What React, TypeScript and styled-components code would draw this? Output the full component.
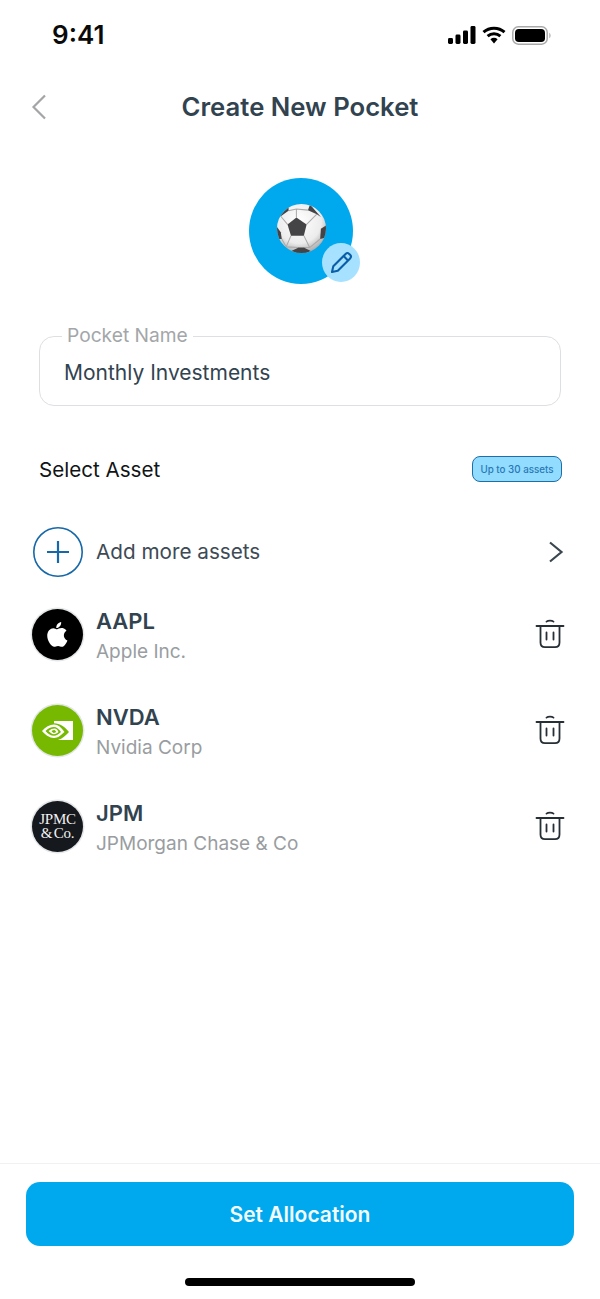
import React from "react";
import styled, { createGlobalStyle } from "styled-components";

const GlobalStyle = createGlobalStyle`
  html, body {
    margin: 0;
    padding: 0;
    background: #fff;
  }
  body {
    font-family: Inter, "Liberation Sans", sans-serif;
  }
`;

const assets = [
  { ticker: "AAPL", name: "Apple Inc.", logo: "apple" },
  { ticker: "NVDA", name: "Nvidia Corp", logo: "nvidia" },
  { ticker: "JPM", name: "JPMorgan Chase & Co", logo: "jpm" },
];

const SignalIcon = () => (
  <svg width="28" height="18" viewBox="0 0 28 18">
    <rect x="0" y="12" width="5" height="6" rx="1.400" fill="#000" />
    <rect x="7.500" y="8.500" width="5" height="9.500" rx="1.400" fill="#000" />
    <rect x="15" y="4.500" width="5" height="13.500" rx="1.400" fill="#000" />
    <rect x="22.500" y="0" width="5" height="18" rx="1.400" fill="#000" />
  </svg>
);

const WifiIcon = () => (
  <svg width="24" height="18" viewBox="0 0 24 18" fill="none">
    <path d="M1.500 6.200C7.400 .9 16.600 .9 22.500 6.200" stroke="#000" strokeWidth="3" />
    <path d="M5.600 10.200C9.300 7 14.700 7 18.400 10.200" stroke="#000" strokeWidth="3" />
    <path d="M8.400 13.200C10.500 11.400 13.500 11.400 15.600 13.200L12 17.400Z" fill="#000" />
  </svg>
);

const BatteryIcon = () => (
  <svg width="39" height="19" viewBox="0 0 39 19">
    <rect x=".8" y=".8" width="34.400" height="17.400" rx="5.500" fill="none" stroke="#a9a9a9" strokeWidth="1.500" />
    <rect x="3" y="3" width="30" height="13" rx="3.800" fill="#000" />
    <path d="M37 6.700C38.300 7.200 38.800 8.300 38.800 9.500C38.800 10.700 38.300 11.800 37 12.300Z" fill="#c4c4c4" />
  </svg>
);

const BackIcon = () => (
  <svg width="16" height="26" viewBox="0 0 16 26" fill="none">
    <path d="M14 1.500L2.500 13L14 24.500" stroke="#a3a5a7" strokeWidth="2.200" />
  </svg>
);

const SoccerBall = () => (
  <svg width="49" height="49" viewBox="0 0 48 48">
    <defs>
      <radialGradient id="ball" cx="45%" cy="35%" r="70%">
        <stop offset="0%" stopColor="#ffffff" />
        <stop offset="65%" stopColor="#ececec" />
        <stop offset="100%" stopColor="#9d9d9d" />
      </radialGradient>
      <clipPath id="ballClip">
        <circle cx="24" cy="24" r="24" />
      </clipPath>
    </defs>
    <circle cx="24" cy="24" r="24" fill="url(#ball)" />
    <g clipPath="url(#ballClip)">
      <path
        d="M19 13.300V5M19 5L11.300 6.700M19 5L30.300 6M29 20L39 10M10.300 20L3.700 12M26.300 31L32 42.700M13.700 31L9 42M42.300 34.300L32 42.700M4.700 34.300L9 42M9 42L21.300 42.700M32 42.700L26.300 42.700"
        fill="none"
        stroke="#a9a9a9"
        strokeWidth="1"
      />
      <path d="M19 13.300L29 20L26.300 31H13.700L10.300 20Z" fill="#444446" />
      <path d="M32.300 .5L43 12.700L39 10L30.300 6Z" fill="#444446" />
      <path d="M11.300 2.700L.3 12.700L3.700 12L11.300 6.700Z" fill="#444446" />
      <path d="M48 21L43 24.300L42.300 34.300L48 32.700Z" fill="#444446" />
      <path d="M-1 21L3.700 27.700L4.700 34.300L0 34.300Z" fill="#444446" />
      <path d="M14 46L21.300 42.700H26.300L33 46L24 50Z" fill="#444446" />
    </g>
  </svg>
);

const PencilIcon = () => (
  <svg width="24" height="24" viewBox="0 0 24 24" fill="none">
    <path
      d="M3 21L4.300 15.200L16.600 2.900C17.600 1.900 19.200 1.900 20.200 2.900L21.100 3.800C22.100 4.800 22.100 6.400 21.100 7.400L8.800 19.700L3 21Z"
      stroke="#0a5ea8"
      strokeWidth="2.100"
      strokeLinejoin="round"
    />
    <path d="M14.600 5L19 9.400" stroke="#0a5ea8" strokeWidth="2.100" />
  </svg>
);

const PlusIcon = () => (
  <svg width="50" height="50" viewBox="0 0 50 50" fill="none">
    <circle cx="25" cy="25" r="24.200" stroke="#1668a8" strokeWidth="1.600" />
    <path d="M25 14V36M14 25H36" stroke="#1668a8" strokeWidth="2.200" />
  </svg>
);

const ChevronIcon = () => (
  <svg width="16" height="22" viewBox="0 0 16 22" fill="none">
    <path d="M2 1.500L13.500 11L2 20.500" stroke="#3a4650" strokeWidth="2.200" />
  </svg>
);

const TrashIcon = () => (
  <svg width="30" height="30" viewBox="0 0 30 30" fill="none" stroke="#262f36" strokeWidth="1.800" strokeLinecap="round">
    <path d="M11.500 2.600C13 1.400 17 1.400 18.500 2.600" />
    <path d="M1.500 7H28.500" />
    <path d="M5.500 7V23.500C5.500 26.500 7.200 28.200 10 28.200H20C22.800 28.200 24.500 26.500 24.500 23.500V7" />
    <path d="M11.500 13.500V20.500M18.500 13.500V20.500" />
  </svg>
);

const AppleLogo = () => (
  <svg width="23" height="25" viewBox="0 0 25 28" fill="#fff">
    <path d="M16.600 0c.2 2-.5 3.500-1.500 4.800-1 1.200-2.500 2.100-4 2-.2-1.800.6-3.500 1.500-4.600C13.700 1 15.200.2 16.600 0z" />
    <path d="M12 8.100c1 0 2.800-1.400 5.200-1.300 1 0 3.700.4 5.400 2.900-4.400 2.800-3.700 8.900 1 10.900-.9 2.500-3.500 7.100-6.200 7.200-1.500 0-2.400-1-4.300-1s-2.900 1-4.300 1C5.900 27.800 1 21.500 1 15.500 1 10 4.500 7 7.800 6.900c1.700 0 3.200 1.200 4.200 1.200z" />
  </svg>
);

const NvidiaLogo = () => (
  <svg width="31" height="19" viewBox="0 0 31 19">
    <path d="M12 0H31V19H12Z" fill="#fff" />
    <path d="M-1 10C3 5 8 2.300 12 2.300C18 2.300 23 6 27 11C23 15 19 19.500 12 19.500C7 19.500 3 15 -1 10Z" fill="#76b900" />
    <path d="M0 10C3.500 6 7.500 3.500 12 3.500C16 3.500 19.500 6.500 22.500 11C19 14 16 17 12 17C7.500 17 3.500 14 0 10Z" fill="#fff" />
    <path d="M3.500 10C6 7.500 9 6 12 6C14.500 6 17 8 19 11C16.500 13 14.500 14.800 12 14.800C9 14.800 6 13 3.500 10Z" fill="#76b900" />
    <path d="M6.500 10C8.500 8.300 10.500 7.500 12.500 7.500C14.500 7.500 15.500 9 16.500 11C15 12.300 13.500 13.200 12 13.200C10 13.200 8.500 12 6.500 10Z" fill="#fff" />
    <path d="M9.500 10C10.500 9.300 11.500 9 12.500 9C13.500 9.500 14 10.300 14 11C13 11.700 12.500 11.900 12 11.900C11 11.900 10.300 11 9.500 10Z" fill="#76b900" />
  </svg>
);

const logos: Record<string, React.ReactNode> = {
  apple: <AppleLogo />,
  nvidia: <NvidiaLogo />,
  jpm: (
    <>
      <span>JPMC</span>
      <span>&amp; Co.</span>
    </>
  ),
};

const logoColors: Record<string, string> = {
  apple: "#000000",
  nvidia: "#76b900",
  jpm: "#15181c",
};

export default function App() {
  return (
    <>
      <GlobalStyle />
      <Screen>
        <StatusBar>
          <Time>9:41</Time>
          <StatusIcons>
            <SignalIcon />
            <WifiIcon />
            <BatteryIcon />
          </StatusIcons>
        </StatusBar>

        <Header>
          <BackButton>
            <BackIcon />
          </BackButton>
          <Title>Create New Pocket</Title>
        </Header>

        <AvatarRow>
          <Avatar>
            <SoccerBall />
            <EditBadge>
              <PencilIcon />
            </EditBadge>
          </Avatar>
        </AvatarRow>

        <Field>
          <FieldLabel>Pocket Name</FieldLabel>
          <FieldValue>Monthly Investments</FieldValue>
        </Field>

        <SectionRow>
          <SectionTitle>Select Asset</SectionTitle>
          <LimitBadge>Up to 30 assets</LimitBadge>
        </SectionRow>

        <AddRow>
          <PlusIcon />
          <AddLabel>Add more assets</AddLabel>
          <ChevronIcon />
        </AddRow>

        <AssetList>
          {assets.map((asset) => (
            <AssetRow key={asset.ticker}>
              <Logo $bg={logoColors[asset.logo]}>{logos[asset.logo]}</Logo>
              <AssetText>
                <Ticker>{asset.ticker}</Ticker>
                <AssetName>{asset.name}</AssetName>
              </AssetText>
              <TrashButton>
                <TrashIcon />
              </TrashButton>
            </AssetRow>
          ))}
        </AssetList>

        <Footer>
          <PrimaryButton>Set Allocation</PrimaryButton>
          <HomeIndicator />
        </Footer>
      </Screen>
    </>
  );
}

const Screen = styled.div`
  width: 600px;
  height: 1299px;
  display: flex;
  flex-direction: column;
  background: #fff;
  overflow: hidden;
`;

const StatusBar = styled.div`
  height: 68px;
  flex: none;
  display: flex;
  align-items: center;
  justify-content: space-between;
  padding: 2px 49px 0 52px;
  box-sizing: border-box;
`;

const Time = styled.div`
  font-size: 26px;
  font-weight: 600;
  margin-top: -2px;
  color: #0a0a0a;
`;

const StatusIcons = styled.div`
  display: flex;
  align-items: center;
  gap: 6px;
`;

const Header = styled.div`
  height: 78px;
  flex: none;
  display: flex;
  align-items: center;
  justify-content: center;
  position: relative;
`;

const BackButton = styled.div`
  position: absolute;
  left: 31px;
  top: 26px;
  display: flex;
`;

const Title = styled.h1`
  margin: 0 0 2px;
  font-size: 25.700px;
  font-weight: 600;
  color: #324350;
`;

const AvatarRow = styled.div`
  display: flex;
  justify-content: center;
  padding-top: 32px;
`;

const Avatar = styled.div`
  width: 104px;
  height: 106px;
  margin-left: 2px;
  border-radius: 50%;
  background: #00a8ee;
  display: flex;
  align-items: center;
  justify-content: center;
  position: relative;
  padding-bottom: 6px;
  box-sizing: border-box;
`;

const EditBadge = styled.div`
  position: absolute;
  right: -7px;
  bottom: 2px;
  width: 38px;
  height: 39px;
  border-radius: 50%;
  background: #a6e2ff;
  display: flex;
  align-items: center;
  justify-content: center;
`;

const Field = styled.div`
  position: relative;
  margin: 52px 39px 0;
  height: 70px;
  box-sizing: border-box;
  border: 1.500px solid #dddfe2;
  border-radius: 15px;
  display: flex;
  align-items: center;
  padding: 2px 24px 0;
`;

const FieldLabel = styled.span`
  position: absolute;
  left: 22px;
  top: -13px;
  padding: 0 5px;
  background: #fff;
  font-size: 19.200px;
  line-height: 22px;
  color: #a3a6a9;
`;

const FieldValue = styled.span`
  font-size: 21px;
  color: #324350;
`;

const SectionRow = styled.div`
  display: flex;
  align-items: center;
  justify-content: space-between;
  margin: 49px 38px 0 39px;
  height: 28px;
`;

const SectionTitle = styled.span`
  font-size: 20.600px;
  color: #111416;
`;

const LimitBadge = styled.span`
  box-sizing: border-box;
  width: 90px;
  height: 26px;
  display: flex;
  align-items: center;
  justify-content: center;
  background: #91dcff;
  border: 1px solid #1e6ea8;
  border-radius: 8px;
  font-size: 9.800px;
  font-weight: 500;
  color: #2a78b5;
`;

const AddRow = styled.div`
  display: flex;
  align-items: center;
  margin: 44px 36px 0 33px;
  gap: 13px;
`;

const AddLabel = styled.span`
  flex: 1;
  font-size: 20.700px;
  margin-bottom: 2px;
  color: #3e4a55;
`;

const AssetList = styled.div`
  display: flex;
  flex-direction: column;
  gap: 38px;
  margin-top: 28px;
  padding: 0 35px 0 32px;
  flex: 1;
`;

const AssetRow = styled.div`
  display: flex;
  align-items: center;
  height: 58px;
  gap: 13px;
`;

const Logo = styled.div<{ $bg: string }>`
  flex: none;
  width: 51px;
  height: 51px;
  border-radius: 50%;
  background: ${(props) => props.$bg};
  box-shadow: 0 0 0 1.500px #e4e6e8;
  color: #f2f2f2;
  font-family: "Liberation Serif", serif;
  font-size: 15px;
  line-height: 14px;
  letter-spacing: -0.2px;
  word-spacing: -2px;
  display: flex;
  flex-direction: column;
  align-items: center;
  justify-content: center;
`;

const AssetText = styled.div`
  flex: 1;
  display: flex;
  flex-direction: column;
  gap: 4px;
  padding-top: 5px;
`;

const Ticker = styled.span`
  font-size: 22px;
  line-height: 27px;
  font-weight: 600;
  color: #324350;
`;

const AssetName = styled.span`
  font-size: 19px;
  line-height: 26px;
  color: #999da1;
`;

const TrashButton = styled.div`
  display: flex;
`;

const Footer = styled.div`
  flex: none;
  height: 136px;
  box-sizing: border-box;
  border-top: 1px solid #f0f1f2;
  padding: 18px 26px 0;
  display: flex;
  flex-direction: column;
  align-items: center;
`;

const PrimaryButton = styled.div`
  width: 100%;
  height: 64px;
  flex: none;
  display: flex;
  align-items: center;
  justify-content: center;
  background: #00a8ee;
  border-radius: 14px;
  color: #f4fbff;
  font-size: 21px;
  font-weight: 600;
`;

const HomeIndicator = styled.div`
  width: 230px;
  height: 8px;
  flex: none;
  margin-top: 32px;
  border-radius: 4px;
  background: #000;
`;
